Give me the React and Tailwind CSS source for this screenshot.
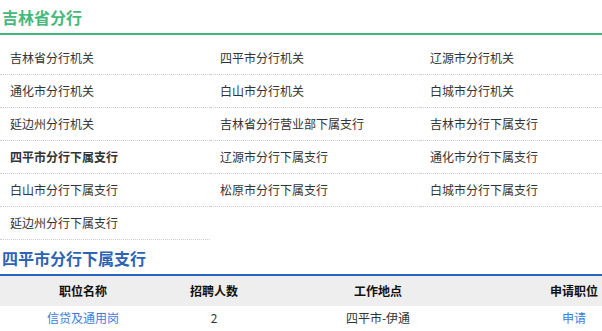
import React from "react";

const items = [
  "吉林省分行机关", "四平市分行机关", "辽源市分行机关",
  "通化市分行机关", "白山市分行机关", "白城市分行机关",
  "延边州分行机关", "吉林省分行营业部下属支行", "吉林市分行下属支行",
  "四平市分行下属支行", "辽源市分行下属支行", "通化市分行下属支行",
  "白山市分行下属支行", "松原市分行下属支行", "白城市分行下属支行",
  "延边州分行下属支行",
];

export default function App() {
  return (
    <div
      className="w-[602px] h-[331px] overflow-hidden bg-white"
      style={{ fontFamily: '"Microsoft YaHei", "Noto Sans CJK SC", "Noto Sans", sans-serif' }}
    >
      <div className="h-[35px] border-b-2 border-[#43b77b] pl-[2px] pt-[5px]">
        <span className="text-[16px] leading-[22px] font-bold text-[#45b97c]">吉林省分行</span>
      </div>
      <div className="grid grid-cols-[210px_210px_182px] pt-[7px]">
        {items.map((t, i) => (
          <div
            key={i}
            className={`h-[33px] border-b border-dotted border-[#cccccc] pl-[10px] flex items-center text-[12px] text-[#333333] ${
              i === 9 ? "font-bold text-[#222222]" : ""
            }`}
          >
            {t}
          </div>
        ))}
      </div>
      <div className="h-[36px] border-b-2 border-[#2b63c1] pl-[2px] pt-[6px]">
        <span className="text-[16px] leading-[22px] font-bold text-[#2d62b8]">四平市分行下属支行</span>
      </div>
      <div className="w-[654px]">
        <div className="grid grid-cols-[166px_96px_232px_160px] h-[30px] bg-[#eeeeee] items-center text-[12px] font-bold text-[#111111] text-center">
          <div>职位名称</div>
          <div>招聘人数</div>
          <div>工作地点</div>
          <div>申请职位</div>
        </div>
        <div className="grid grid-cols-[166px_96px_232px_160px] h-[24px] items-center text-[12px] text-center text-[#333333]">
          <div className="text-[#3b7ddd]">信贷及通用岗</div>
          <div>2</div>
          <div>四平市-伊通</div>
          <div className="text-[#3b7ddd]">申请</div>
        </div>
      </div>
    </div>
  );
}
